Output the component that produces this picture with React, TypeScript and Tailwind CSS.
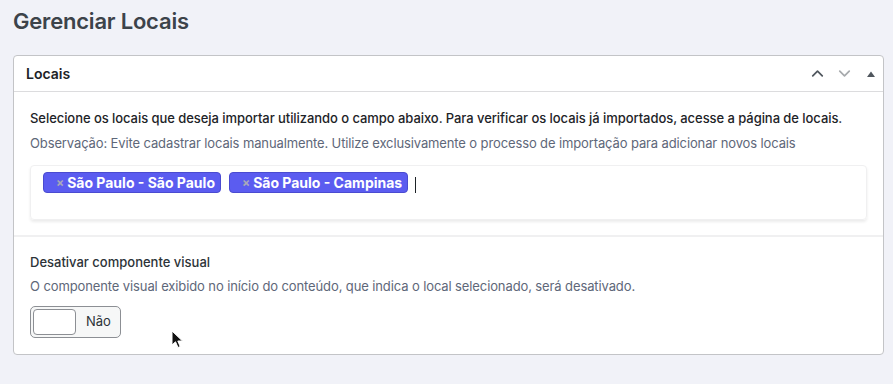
import { ChevronUp, ChevronDown } from 'lucide-react';

type TagType = {
  label: string
}

const Tag = ({ label }: TagType) => {
  return (
    <span className="flex items-center h-[21px] pl-[12px] pr-[5px] rounded-[4px] bg-[#5b5cf0] border border-[#4a4bd0] text-white text-[14px] font-bold leading-none">
      <span className="text-[#a9a9b8] text-[12px] font-bold mr-[3px]">×</span>
      {label}
    </span>
  )
}

const App = () => {
  const tags = ['São Paulo - São Paulo', 'São Paulo - Campinas'];

  return (
    <div
      className="relative w-[893px] h-[384px] bg-[#f1f2f8] px-[13px] pt-[6px] overflow-hidden"
      style={{ fontFamily: 'Inter, "Noto Sans", sans-serif' }}
    >
      <h1 className="text-[22px] leading-[30px] font-semibold text-[#3c434a] tracking-[-0.2px]">
        Gerenciar Locais
      </h1>

      <section className="mt-[19px] w-[871px] bg-white border border-[#c3c4c7] rounded-[4px]">
        {/* header */}
        <header className="h-[36px] flex items-center justify-between pl-[12px] pr-[3px] border-b border-[#dcdcde]">
          <span className="text-[14px] font-semibold text-[#1d2327]">Locais</span>
          <div className="flex items-center gap-[8px] text-[#50575e]">
            <ChevronUp className="w-[19px] h-[19px]" strokeWidth={2.2} />
            <ChevronDown className="w-[19px] h-[19px] text-[#a7aaad]" strokeWidth={2.2} />
            <svg width="18" height="18" viewBox="0 0 18 18">
              <path d="M5 12 L9 6.5 L13 12 Z" fill="#50575e" />
            </svg>
          </div>
        </header>

        {/* locais */}
        <div className="px-[16px] pt-[16px] pb-[15px]">
          <p className="text-[13px] leading-[20px] font-medium text-[#1d2327] tracking-[-0.06px]">
            Selecione os locais que deseja importar utilizando o campo abaixo. Para verificar os locais já importados, acesse a página de locais.
          </p>
          <p className="mt-[5px] text-[13px] leading-[20px] text-[#5e6779] tracking-[-0.12px]">
            Observação: Evite cadastrar locais manualmente. Utilize exclusivamente o processo de importação para adicionar novos locais
          </p>
          <div className="mt-[12px] w-[837px] h-[55px] rounded-[4px] border border-[#f0f0f1] shadow-[0_2px_3px_rgba(0,0,0,0.08)] px-[12px] pt-[6px]">
            <div className="flex items-center gap-[8px]">
              {tags.map((tag) => (
                <Tag key={tag} label={tag} />
              ))}
              <span className="w-px h-[16px] bg-[#1d2327] mt-[4px] -ml-[1px]" />
            </div>
          </div>
        </div>

        <div className="h-[2px] bg-[#f0f0f1]" />

        {/* componente visual */}
        <div className="px-[16px] pt-[15px] pb-[16px]">
          <p className="text-[13px] leading-[20px] font-medium text-[#2c3338]">
            Desativar componente visual
          </p>
          <p className="mt-[4px] text-[13px] leading-[20px] text-[#5e6779] tracking-[-0.11px]">
            O componente visual exibido no início do conteúdo, que indica o local selecionado, será desativado.
          </p>
          <button
            type="button"
            className="mt-[10px] flex items-center w-[91px] h-[32px] rounded-[5px] border border-[#8c8f94] bg-[#f6f7f7] p-[2px]"
          >
            <span className="w-[43px] h-[26px] rounded-[4px] bg-white border border-[#8c8f94]" />
            <span className="ml-[10px] text-[13px] text-[#2c3338]">Não</span>
          </button>
        </div>
      </section>

      {/* mouse pointer */}
      <svg className="absolute left-[171px] top-[330px]" width="14" height="20" viewBox="0 0 14 20">
        <path d="M1 1 L1 15 L4.5 11.8 L7 17.5 L9.2 16.5 L6.8 11 L11.5 11 Z" fill="#111" stroke="#fff" strokeWidth="1" />
      </svg>
    </div>
  )
}

export default App;
